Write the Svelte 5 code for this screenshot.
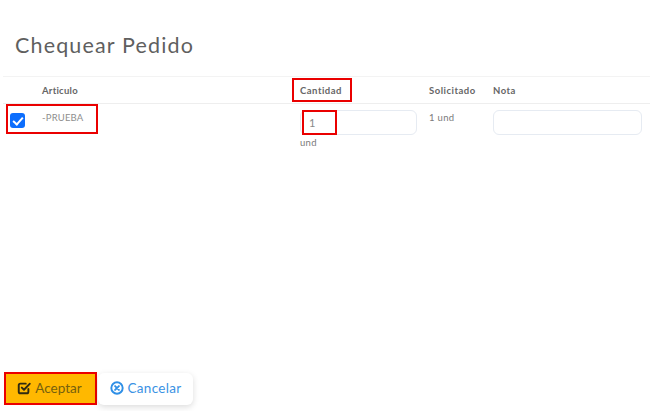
<script lang="ts">
  let checked = $state(true);
  let cantidad = $state('1');
  let nota = $state('');
</script>

<div class="page">
  <h1>Chequear Pedido</h1>

  <div class="table">
    <div class="row head">
      <div></div>
      <div class="articulo">Articulo</div>
      <div class="marked-head">Cantidad<span class="mark"></span></div>
      <div>Solicitado</div>
      <div>Nota</div>
    </div>
    <div class="row body">
      <div class="check-cell">
        <input class="check" type="checkbox" bind:checked />
        <span class="mark mark-item"></span>
      </div>
      <div class="article">-PRUEBA</div>
      <div class="qty">
        <div class="qty-box">
          <input type="text" bind:value={cantidad} />
          <span class="mark mark-qty"></span>
        </div>
        <span class="unit">und</span>
      </div>
      <div class="asked">1 und</div>
      <div><input class="note" type="text" bind:value={nota} /></div>
    </div>
  </div>

  <div class="actions">
    <button class="btn ok">
      <svg viewBox="0 0 16 16" width="14" height="14" fill="none" stroke="#2f2a12" stroke-width="2.2" stroke-linecap="round" stroke-linejoin="round">
        <path d="M13 9v3.200A1.800 1.800 0 0 1 11.200 14H3.800A1.800 1.800 0 0 1 2 12.200V4.800A1.800 1.800 0 0 1 3.800 3H10" />
        <path d="M5.500 7.500l2.500 2.500 6.500-6.800" />
      </svg>
      Aceptar
      <span class="mark mark-ok"></span>
    </button>
    <button class="btn cancel">
      <svg viewBox="0 0 16 16" width="14" height="14" fill="none" stroke="#2f8fe6" stroke-width="2.200" stroke-linecap="round">
        <circle cx="8" cy="8" r="6.500" />
        <path d="M5.800 5.800l4.400 4.400M10.200 5.800l-4.400 4.400" />
      </svg>
      Cancelar
    </button>
  </div>
</div>

<style>
  :global(body) {
    margin: 0;
    background: #fff;
  }

  .page {
    position: relative;
    height: 411px;
    box-sizing: border-box;
    padding-top: 32px;
    font-family: Lato, "Noto Sans", sans-serif;
    color: #6a6a6a;
    overflow: hidden;
  }

  h1 {
    margin: 0 0 18px 15px;
    font-size: 21.500px;
    line-height: 26px;
    font-weight: 400;
    letter-spacing: 1.150px;
    color: #5f5f5f;
  }

  .table {
    margin: 0 4px 0 3px;
  }

  .row {
    display: grid;
    grid-template-columns: 39px 258px 129px 64px 1fr;
  }

  .head {
    height: 28px;
    align-items: center;
    border-top: 1px solid #f3f3f3;
    border-bottom: 1px solid #eeeeee;
    box-sizing: border-box;
    font-size: 9.500px;
    font-weight: 700;
    letter-spacing: 0.5px;
    color: #666;
  }

  .articulo {
    letter-spacing: 0.250px;
  }

  .marked-head {
    position: relative;
  }

  .body {
    padding-top: 6px;
    font-size: 9.500px;
  }

  .check-cell {
    position: relative;
  }

  .check {
    appearance: none;
    display: grid;
    place-items: center;
    width: 15px;
    height: 15px;
    margin: 3px 0 0 7px;
    border-radius: 3px;
    background: #0d6efd;
  }

  .check::after {
    content: "";
    width: 4px;
    height: 8px;
    margin-top: -2px;
    border: solid #fff;
    border-width: 0 2.200px 2.200px 0;
    transform: rotate(42deg);
  }

  .article {
    padding-top: 2px;
    color: #8e8e8e;
    letter-spacing: 0.200px;
  }

  .qty-box {
    position: relative;
    width: 117px;
  }

  .qty input,
  .note {
    display: block;
    box-sizing: border-box;
    height: 25px;
    border: 1px solid #e6ebf2;
    border-radius: 6px;
    outline: none;
    background: #fff;
    font: inherit;
    color: #888;
  }

  .qty input {
    width: 100%;
    padding: 0 8px;
    font-size: 11px;
  }

  .unit {
    display: block;
    margin-top: 2px;
    letter-spacing: 0.300px;
    color: #7a7a7a;
  }

  .asked {
    padding-top: 2px;
    letter-spacing: 0.300px;
    color: #7a7a7a;
  }

  .note {
    width: 149px;
  }

  .actions {
    position: absolute;
    left: 5px;
    top: 373px;
    display: flex;
    gap: 2px;
  }

  .btn {
    position: relative;
    display: flex;
    align-items: center;
    justify-content: center;
    gap: 4px;
    height: 32px;
    padding: 0 0 2px;
    border: 0;
    border-radius: 4px;
    font-family: inherit;
    font-size: 13.500px;
  }

  .ok {
    width: 91px;
    padding-right: 2px;
    background: #ffb800;
    color: #75600f;
  }

  .cancel {
    width: 95px;
    background: #fff;
    color: #3a92e4;
    border-radius: 6px;
    letter-spacing: 0.300px;
    box-shadow: 0 2px 6px rgba(0, 0, 0, 0.14);
  }

  /* red annotation boxes sitting over the screenshot */
  .mark {
    position: absolute;
    border: 2px solid #ea0000;
    box-sizing: border-box;
    pointer-events: none;
  }

  .marked-head .mark {
    left: -8px;
    top: -7px;
    width: 60px;
    height: 24px;
  }

  .mark-item {
    left: 3px;
    top: -6px;
    width: 92px;
    height: 30px;
  }

  .mark-qty {
    left: 2px;
    top: 0;
    width: 35px;
    height: 25px;
  }

  .mark-ok {
    left: -1px;
    top: -1px;
    width: 93px;
    height: 33px;
  }
</style>
